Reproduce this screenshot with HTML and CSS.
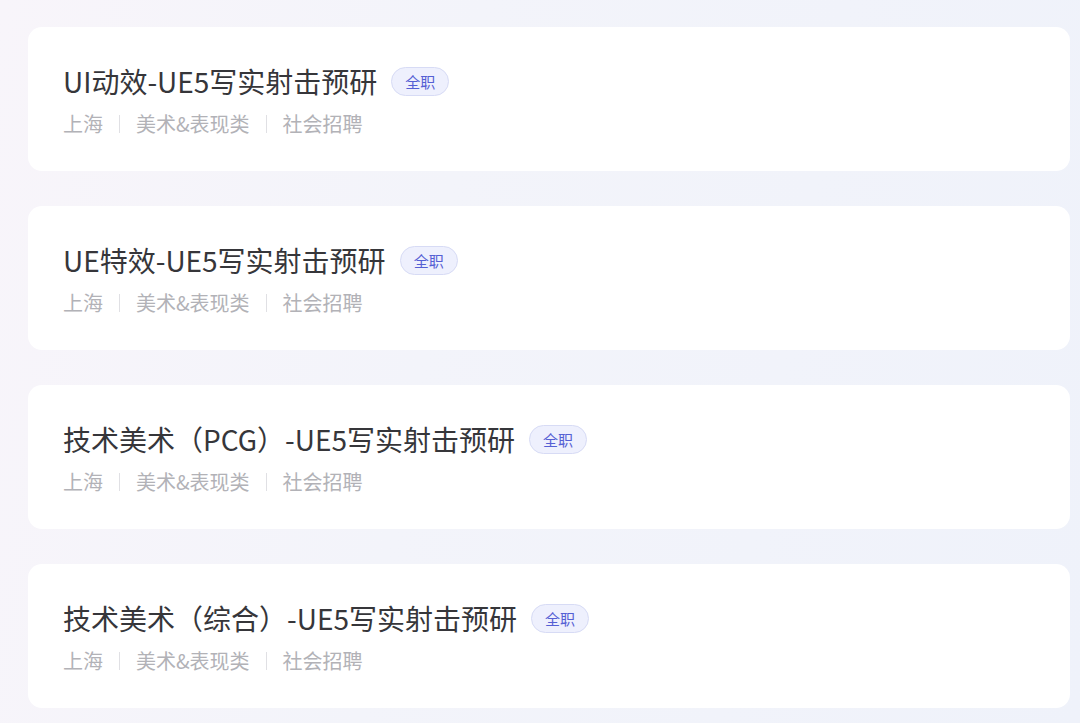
FILE: index.html
```html
<!DOCTYPE html>
<html>
<head>
    <meta charset="utf-8">
    <title>社会招聘</title>
    <link rel="stylesheet" href="styles.css">
</head>
<body>

    <!-- Job list -->
    <div class="job-list">
        <div class="job">
            <div class="job-title">
                <span>UI动效-UE5写实射击预研</span>
                <span class="tag">全职</span>
            </div>
            <div class="job-meta">
                <span>上海</span><i class="sep"></i><span>美术&amp;表现类</span><i class="sep"></i><span>社会招聘</span>
            </div>
        </div>

        <div class="job">
            <div class="job-title">
                <span>UE特效-UE5写实射击预研</span>
                <span class="tag">全职</span>
            </div>
            <div class="job-meta">
                <span>上海</span><i class="sep"></i><span>美术&amp;表现类</span><i class="sep"></i><span>社会招聘</span>
            </div>
        </div>

        <div class="job">
            <div class="job-title">
                <span>技术美术（PCG）-UE5写实射击预研</span>
                <span class="tag">全职</span>
            </div>
            <div class="job-meta">
                <span>上海</span><i class="sep"></i><span>美术&amp;表现类</span><i class="sep"></i><span>社会招聘</span>
            </div>
        </div>

        <div class="job">
            <div class="job-title">
                <span>技术美术（综合）-UE5写实射击预研</span>
                <span class="tag">全职</span>
            </div>
            <div class="job-meta">
                <span>上海</span><i class="sep"></i><span>美术&amp;表现类</span><i class="sep"></i><span>社会招聘</span>
            </div>
        </div>
    </div>

</body>
</html>
```

FILE: styles.css
```css
html, body {
    height: 100%;
}
body {
    margin: 0;
    font-family: "Noto Sans CJK SC", "Noto Sans", sans-serif;
    background: linear-gradient(100deg, #f8f5fa 0%, #f3f4fa 40%, #eff2fa 100%);
    overflow: hidden;
}
.job-list {
    display: flex;
    flex-direction: column;
    gap: 35px;
    padding: 27px 10px 0 28px;
}
.job {
    background: white;
    border-radius: 14px;
    padding: 36px 35px 34px;
    height: 144px;
    box-sizing: border-box;
}
.job-title {
    display: flex;
    align-items: center;
    gap: 14px;
    font-size: 28px;
    line-height: 36px;
    color: #36363a;
}
.tag {
    display: inline-block;
    font-size: 15px;
    line-height: 27px;
    padding: 0 13px;
    border-radius: 15px;
    color: #5560d4;
    background: #eef0fd;
    border: 1px solid #d7dbf5;
}
.job-meta {
    display: flex;
    align-items: center;
    margin-top: 12px;
    font-size: 20px;
    line-height: 26px;
    color: #b2b2b7;
}
.sep {
    display: inline-block;
    width: 1px;
    height: 18px;
    margin: 0 16px;
    background: #e0e0e4;
}
```
